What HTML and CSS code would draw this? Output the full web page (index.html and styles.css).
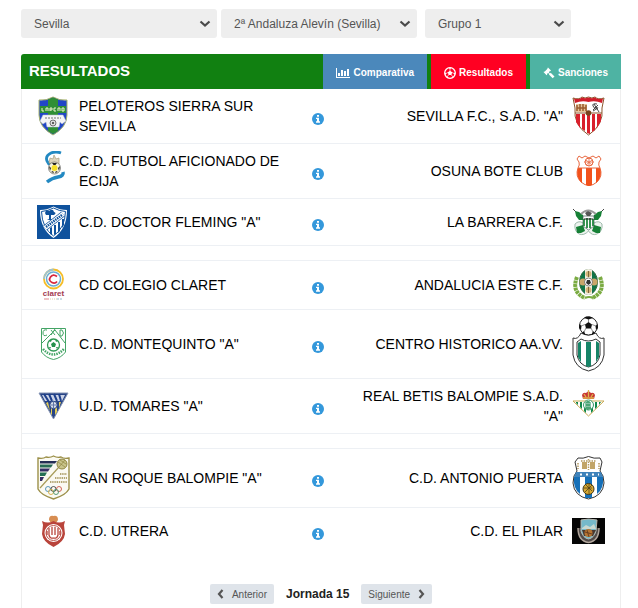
FILE: index.html
```html
<!DOCTYPE html>
<html lang="es">
<head>
    <meta charset="UTF-8">
    <meta name="viewport" content="width=device-width, initial-scale=1.0">
    <title>Resultados</title>
    <link rel="stylesheet" href="styles.css">
</head>
<body>
    <!-- shared icons -->
    <svg class="sprite" aria-hidden="true">
        <symbol id="chevron" viewBox="0 0 12 8">
            <path d="M1.500 1.500 6 5.500 10.500 1.500" fill="none" stroke="#4a4a4a" stroke-width="2.200"/>
        </symbol>
        <symbol id="info" viewBox="0 0 12 12">
            <circle cx="6" cy="6" r="6" fill="#3498db"/>
            <path d="M5 2h2v1.700H5zM4 4.700h3v3.600h1V9.700H4V8.300h1V6H4z" fill="#fff"/>
        </symbol>
    </svg>

    <div class="page">
        <form class="filters">
            <div class="filter">
                <select aria-label="Provincia">
                    <option>Sevilla</option>
                </select>
                <svg class="arrow"><use href="#chevron"/></svg>
            </div>
            <div class="filter">
                <select aria-label="Competición">
                    <option>2ª Andaluza Alevín (Sevilla)</option>
                </select>
                <svg class="arrow"><use href="#chevron"/></svg>
            </div>
            <div class="filter group">
                <select aria-label="Grupo">
                    <option>Grupo 1</option>
                </select>
                <svg class="arrow"><use href="#chevron"/></svg>
            </div>
        </form>

        <div class="panel-header">
            <h1>RESULTADOS</h1>
            <nav class="tabs">
                <a class="tab compare" href="#comparativa">
                    <svg width="14" height="12" viewBox="0 0 14 12"><path d="M0 1h1v9h13v1H0zM2 6h2v3H2zM5 3h2v6H5zM8 4h2v5H8zM11 2h2v7h-2z" fill="#fff"/></svg>
                    Comparativa
                </a>
                <a class="tab results" href="#resultados">
                    <svg width="12" height="12" viewBox="0 0 12 12">
                        <circle cx="6" cy="6" r="5.300" fill="none" stroke="#fff" stroke-width="1.300"/>
                        <path d="M6 3.700 8.200 5.300 7.400 7.900H4.600L3.800 5.300zM4 .8 6 2 8 .8zM.6 5.200 2.200 6.500 1.500 8.600zM11.400 5.200 9.800 6.500 10.500 8.600zM3.400 9 4.300 11.500 2.300 10zM8.600 9 7.700 11.500 9.700 10z" fill="#fff"/>
                        <path d="M6 2V4M2 6.500 4 5.500M10 6.500 8 5.500M3.600 9.300 4.700 7.700M8.400 9.300 7.300 7.700" stroke="#fff" stroke-width=".7"/>
                    </svg>
                    Resultados
                </a>
                <a class="tab sanctions" href="#sanciones">
                    <svg width="12" height="12" viewBox="0 0 12 12"><path d="M5 .5 8 3.500 7.300 4.300 7 4 5.800 5.200 7 6.400 7.700 5.700 11.500 9.500 9.700 11.300 5.900 7.500 6.300 7.100 5.100 5.900 3.900 7.100 4.300 7.500 3.600 8.200.5 5.100 1.200 4.400 1.600 4.800 4.700 1.600 4.300 1.200z" fill="#fff"/></svg>
                    Sanciones
                </a>
            </nav>
        </div>

        <div class="panel">
            <table class="matches">
                <colgroup>
                    <col class="col-crest"><col><col class="col-info"><col><col class="col-crest">
                </colgroup>
                <tbody>
                    <tr>
                        <td class="crest">
                            <svg width="33" height="40" viewBox="0 0 33 40">
                                <path d="M2 4Q9 5 16 1 23 5 30 4V19Q30 31 16 39 2 31 2 19z" fill="#2146c7" stroke="#a9b46c"/>
                                <path d="M11 3.500 16 1.500 21 3.500V35L16 38 11 35z" fill="#2f8f35"/>
                                <path d="M3 10H29V17H3z" fill="#2f8f35"/>
                                <path d="M5 12V15H7M9 12V15M9 12H11V15M13 15V12H15V14H13M17 12V15H19M17 12H19M21 15V12H23V15M25 12H27V15H25z" fill="none" stroke="#eef3cf"/>
                                <path d="M6 19H26L29 25 25 28 23 26 22 31H10L9 26 6 28 3 25z" fill="#f4f5f7" stroke="#b9bfd0" stroke-width=".5"/>
                                <path d="M8 22H24" stroke="#777" stroke-dasharray="2 1"/>
                                <circle cx="16" cy="27" r="3" fill="#ddd" stroke="#555" stroke-width=".8"/>
                                <circle cx="16" cy="27" r="1" fill="#333"/>
                            </svg>
                        </td>
                        <td class="team">PELOTEROS SIERRA SUR SEVILLA</td>
                        <td class="more"><a href="#partido1" aria-label="Información"><svg><use href="#info"/></svg></a></td>
                        <td class="team away">SEVILLA F.C., S.A.D. "A"</td>
                        <td class="crest away">
                            <svg width="33" height="40" viewBox="0 0 33 40">
                                <path d="M1 2Q7 4 10 1 13 3 16.500 1 20 3 23 1 26 4 32 2L30 12Q32 29 16.500 39 1 29 3 12z" fill="#fff" stroke="#8b552c"/>
                                <path d="M2 2.500Q7 4 10 1.500 13 3 16.500 1.500 20 3 23 1.500 26 4 31 2.500L30 7Q23 4 16.500 6 10 4 3 7z" fill="#d01e2b"/>
                                <path d="M4 18H8V32L4 26zM10 18H13V35L10 33zM15 18H18V38L15 37zM20 18H23V34L20 36zM25 18H29V25L25 32z" fill="#d9202c"/>
                                <path d="M4 8H15V16H4z" fill="#e5c59b"/>
                                <path d="M5 15V9M8 15V8M11 15V8M14 15V9M5 12H14" stroke="#9a5b2e" stroke-width="1.500"/>
                                <path d="M3 17H30" stroke="#8b552c"/>
                                <path d="M25 8Q20 7 21 10T25 12 21 15M22 8 27 16M26 9 21 14" fill="none" stroke="#333" stroke-width=".9"/>
                                <circle cx="16.500" cy="17" r="2.800" fill="#7a431f"/>
                            </svg>
                        </td>
                    </tr>
                    <tr>
                        <td class="crest">
                            <svg width="33" height="40" viewBox="0 0 33 40">
                                <path d="M24 2Q19 0 14 2 8 5 10 10 11 13 14 14" fill="none" stroke="#2389c2" stroke-width="2.800"/>
                                <path d="M12 12 13 7 16 8 17 4 19 8 22 7 22 13z" fill="#ddd5bd" stroke="#a99f83" stroke-width=".7"/>
                                <circle cx="17.500" cy="17" r="6" fill="#f7f3dc" stroke="#666" stroke-width=".7"/>
                                <circle cx="17.500" cy="17" r="3" fill="#f6df2a"/>
                                <path d="M15 12H20L18.500 14H16.500zM12 15 14 17 13 20zM23 15 21 17 22 20zM14 21 16 20 17 22zM19 20 21 21 18 22z" fill="#222"/>
                                <path d="M26 21Q27 25 21 26T10 31" fill="none" stroke="#2389c2" stroke-width="3.500"/>
                            </svg>
                        </td>
                        <td class="team">C.D. FUTBOL AFICIONADO DE ECIJA</td>
                        <td class="more"><a href="#partido2" aria-label="Información"><svg><use href="#info"/></svg></a></td>
                        <td class="team away">OSUNA BOTE CLUB</td>
                        <td class="crest away">
                            <svg width="33" height="34" viewBox="0 0 33 34">
                                <path d="M7 2 10 4 13 2 17 4 21 2 24 4 27 2 29 5 27 8Q26 11 28 14 31 22 25 28 17 35 9 28 3 22 6 14 8 11 7 8L5 5z" fill="#fff" stroke="#e8673f"/>
                                <path d="M6 14H10V29Q3 23 6 14M14 14H20V31Q17 33 14 31zM24 14H28Q31 23 24 29z" fill="#f2511b"/>
                                <path d="M6 14H28" stroke="#e8673f"/>
                                <circle cx="17" cy="8" r="4" fill="none" stroke="#e8673f"/>
                                <path d="M14 6 20 11M20 6 14 11M17 4V12M12 8H22" stroke="#e8673f" stroke-width=".8"/>
                            </svg>
                        </td>
                    </tr>
                    <tr>
                        <td class="crest">
                            <svg width="33" height="34" viewBox="0 0 33 34">
                                <path d="M0 0H33V34H0z" fill="#0f529d"/>
                                <path d="M3 5Q10 5 16.500 1.500 23 5 30 5 30 24 16.500 33 3 24 3 5z" fill="#fff"/>
                                <path d="M4.500 6.500Q11 6 16.500 3 22 6 28.500 6.500 28 23 16.500 31 5 23 4.500 6.500z" fill="none" stroke="#0f529d"/>
                                <path d="M8 8Q9 4 12 6 16 3 17 7 20 8 17 10H14V14L16 15H10L12 14V10H9z" fill="#0f529d"/>
                                <path d="M13 23 15 22V30L13 29zM17 20H19V29L17 30zM21 17H23V26L21 28zM25 14H27V20L25 23z" fill="#0f529d"/>
                                <path d="M8 23 26 9" stroke="#0f529d" stroke-width="6"/>
                                <path d="M8 23 26 9" stroke="#fff" stroke-width="4.500"/>
                                <path d="M9 22 25 10" stroke="#0f529d" stroke-width="2.500" stroke-dasharray="1.500 .8"/>
                            </svg>
                        </td>
                        <td class="team">C.D. DOCTOR FLEMING "A"</td>
                        <td class="more"><a href="#partido3" aria-label="Información"><svg><use href="#info"/></svg></a></td>
                        <td class="team away">LA BARRERA C.F.</td>
                        <td class="crest away">
                            <svg width="33" height="34" viewBox="0 0 33 34">
                                <path d="M1 4 9 12M32 4 24 12" stroke="#444"/>
                                <path d="M3 6 7 7 11 10 12 15 7 15 4 11zM30 6 26 7 22 10 21 15 26 15 29 11z" fill="#168036"/>
                                <path d="M9 9Q16 2 24 9" fill="none" stroke="#999" stroke-width="2"/>
                                <path d="M3 19Q7 15 11 18H22Q27 15 30 19 31 26 25 29 20 31 16.500 26 12 31 7 29 2 26 3 19z" fill="#eef4ef" stroke="#8a9" stroke-width=".8"/>
                                <path d="M4 22 11 20 13 26 9 28H5zM29 22 22 20 20 26 24 28H28z" fill="#168036"/>
                                <path d="M11 11H22V21L16.500 25 11 21z" fill="#fff" stroke="#455" stroke-width=".7"/>
                                <path d="M12 14V21M15 13V23M18 13V23M21 14V21" stroke="#168036" stroke-width="1.700"/>
                                <path d="M13 8 16 6 20 8 18 11H15z" fill="#555"/>
                                <path d="M12 14H21" stroke="#222"/>
                            </svg>
                        </td>
                    </tr>
                    <tr class="spacer"><td colspan="5"></td></tr>
                    <tr>
                        <td class="crest">
                            <svg width="33" height="36" viewBox="0 0 33 36">
                                <circle cx="16.500" cy="12" r="9.500" fill="none" stroke="#f5bd27" stroke-width="1.800"/>
                                <path d="M16.500 2.500A9.500 9.500 0 0 0 7 12" fill="none" stroke="#9cc3d3" stroke-width="1.800"/>
                                <circle cx="16.500" cy="12" r="7" fill="none" stroke="#69add1" stroke-width="1.500"/>
                                <path d="M20 9.500Q16 6.500 13.500 10T15 15.500Q18 17 20 14.500" fill="none" stroke="#d8283c" stroke-width="1.800"/>
                                <text x="16.500" y="29" class="claret">claret</text>
                                <path d="M7 32H12" stroke="#d88"/><path d="M13 32H20" stroke="#dca" stroke-dasharray="1 1"/><path d="M20 32H26" stroke="#9bc" stroke-dasharray="2 1"/>
                            </svg>
                        </td>
                        <td class="team">CD COLEGIO CLARET</td>
                        <td class="more"><a href="#partido4" aria-label="Información"><svg><use href="#info"/></svg></a></td>
                        <td class="team away">ANDALUCIA ESTE C.F.</td>
                        <td class="crest away">
                            <svg width="33" height="36" viewBox="0 0 33 36">
                                <path d="M5 10Q-1 25 13 31M28 10Q34 25 20 31" fill="none" stroke="#7bab42" stroke-width="4" stroke-dasharray="3 .6"/>
                                <path d="M13 31Q17 29 21 31" fill="none" stroke="#7bab42" stroke-width="2"/>
                                <ellipse cx="16.500" cy="15" rx="9" ry="12.500" fill="#0f7448" stroke="#376b43"/>
                                <path d="M13 3Q16.500 1 20 3V27Q16.500 29 13 27z" fill="#f2eee0"/>
                                <circle cx="16.500" cy="7" r="3" fill="#d5b67a"/><circle cx="16.500" cy="23" r="3" fill="#d5b67a"/>
                                <circle cx="11" cy="15" r="3.500" fill="#c9a66a"/><circle cx="22" cy="15" r="3.500" fill="#c9a66a"/>
                                <path d="M16.500 4V10M16.500 20V26" stroke="#7c673f"/>
                                <circle cx="16.500" cy="15" r="4" fill="#fff" stroke="#555" stroke-width=".7"/>
                                <path d="M15 13H18L19 16 16.500 18 14 16z" fill="#333"/>
                            </svg>
                        </td>
                    </tr>
                    <tr>
                        <td class="crest">
                            <svg width="33" height="34" viewBox="0 0 33 34">
                                <path d="M4.500 1.500H28.500V25Q24 31 16.500 32.500 9 31 4.500 25z" fill="#fff" stroke="#43a465"/>
                                <path d="M5 16 15 6 18 3 28 16M10 3Q6 2 6 6T10 8M23 3V9H25Q28 6 25 3zM14 3 18 8M18 2 14 8" fill="none" stroke="#43a465"/>
                                <circle cx="16.500" cy="18" r="6" fill="#fff" stroke="#2f9955" stroke-width="1.300"/>
                                <path d="M16.500 15 19 17 18 20H15L14 17zM12 14 15 12 14 15zM21 14 18 12 19 15zM12 20H14L13 22zM21 20H19L20 22z" fill="#24914c"/>
                                <path d="M6 22Q16 33 27 22" fill="none" stroke="#43a465" stroke-width="2.500" stroke-dasharray="1.500 1"/>
                            </svg>
                        </td>
                        <td class="team">C.D. MONTEQUINTO "A"</td>
                        <td class="more"><a href="#partido5" aria-label="Información"><svg><use href="#info"/></svg></a></td>
                        <td class="team away">CENTRO HISTORICO AA.VV.</td>
                        <td class="crest away">
                            <svg width="33" height="56" viewBox="0 0 33 56">
                                <path d="M9 17Q6 24 1 22V39Q3 52 16.500 55 30 52 32 39V22Q27 24 24 17 16 21 9 17z" fill="#fff" stroke="#333"/>
                                <path d="M9 23 5 26V39Q7 49 16.500 51 26 49 28 39V26L24 23Q16 27 9 23z" fill="#fff" stroke="#333"/>
                                <path d="M6 27 9 25V46L6 41zM14 26H19V50L16 51 14 50zM24 25 27 27V41L24 46z" fill="#168467"/>
                                <circle cx="16.500" cy="10" r="9" fill="#fff" stroke="#222"/>
                                <path d="M16.500 6 20 8.500 19 12.500H14L13 8.500zM12 2 16.500 3.500 21 2 18 .5H14zM7.500 8 9.500 10 9 14 7 12zM25.500 8 23.500 10 24 14 26 12zM12 15 13.500 19 10 17zM21 15 19.500 19 23 17z" fill="#111"/>
                                <path d="M16.500 3V6M9 10 13 8.500M24 10 20 8.500M12 16 14 12M21 16 19 12" stroke="#444" stroke-width=".6"/>
                            </svg>
                        </td>
                    </tr>
                    <tr>
                        <td class="crest">
                            <svg width="33" height="34" viewBox="0 0 33 34">
                                <path d="M2 4H31L16.500 30z" fill="#274486" stroke="#8594b4"/>
                                <path d="M5 6H28L25 12H8z" fill="#cbd3e6"/>
                                <path d="M7 5 12 13M12 5 15 12M17 5 20 12M22 5 24 12" stroke="#1d3f8b" stroke-width="2"/>
                                <path d="M9 14 11 13 13 22zM14 13H15V26L14 25zM18 13H20V23L18 26zM22 13H24L22 19z" fill="#e4ce58"/>
                                <circle cx="16.500" cy="16" r="3.700" fill="#d9dfec" stroke="#274486"/>
                                <path d="M14 16H19M16.500 13V19" stroke="#6177a8"/>
                            </svg>
                        </td>
                        <td class="team">U.D. TOMARES "A"</td>
                        <td class="more"><a href="#partido6" aria-label="Información"><svg><use href="#info"/></svg></a></td>
                        <td class="team away">REAL BETIS BALOMPIE S.A.D. "A"</td>
                        <td class="crest away">
                            <svg width="33" height="36" viewBox="0 0 33 36">
                                <path d="M1 13H32L16.500 28z" fill="#fff" stroke="#c9ab55"/>
                                <path d="M4 14H6V17L4 15zM8 14H10V21L8 19zM12 14H14V25L12 23zM19 14H21V23L19 25zM23 14H25V19L23 21zM27 14H29L27 17z" fill="#12884a"/>
                                <circle cx="16.500" cy="17" r="5" fill="#fff" stroke="#3a9a68"/>
                                <path d="M14 14V21M14 14H18V17H14M18 17V21M14 20H19M16 13V22" fill="none" stroke="#12884a"/>
                                <path d="M11 11 10 7Q11 4 14 5L16.500 3 19 5Q22 4 23 7L22 11z" fill="#c83734"/>
                                <path d="M11 10H22M12 6 14 9M21 6 19 9M16.500 2V9" stroke="#dfb44b" stroke-width="1.300"/>
                            </svg>
                        </td>
                    </tr>
                    <tr class="spacer"><td colspan="5"></td></tr>
                    <tr>
                        <td class="crest">
                            <svg width="33" height="46" viewBox="0 0 33 46">
                                <path d="M1 3Q6 4 9 2 13 3 16.500 1 20 3 24 2 27 4 32 3V34Q29 40 16.500 44 4 40 1 34z" fill="#fbfaf2" stroke="#9c9049" stroke-width="1.400"/>
                                <path d="M3 6H20L18 8.500H3z" fill="#252e55"/><path d="M3 9.500H16L14 12.500H3z" fill="#286b55"/><path d="M3 13.500H13L11 16.500H3z" fill="#352e66"/><path d="M3 17.500H10L8 21H3z" fill="#247055"/><path d="M3 22H7L5 26H3z" fill="#352e66"/>
                                <path d="M3 33 22 12" stroke="#a69b58" stroke-width="1.200"/>
                                <circle cx="25" cy="9" r="5" fill="#c9c48b" stroke="#8f8541"/>
                                <path d="M21 7 28 12M23 5 29 9M22 12 28 5" stroke="#8f8541" stroke-width=".7"/>
                                <path d="M23 19H30M18 23H30M13 27H30" stroke="#b5a774" stroke-width="2.200" stroke-dasharray="1.400 .8"/>
                                <g fill="none" stroke-width=".9"><circle cx="11" cy="34" r="2.500" stroke="#4a8db6"/><circle cx="16.500" cy="34" r="2.500" stroke="#444"/><circle cx="22" cy="34" r="2.500" stroke="#cc5447"/><circle cx="14" cy="37" r="2.500" stroke="#d5ae43"/><circle cx="19" cy="37" r="2.500" stroke="#48936b"/></g>
                            </svg>
                        </td>
                        <td class="team">SAN ROQUE BALOMPIE "A"</td>
                        <td class="more"><a href="#partido7" aria-label="Información"><svg><use href="#info"/></svg></a></td>
                        <td class="team away">C.D. ANTONIO PUERTA</td>
                        <td class="crest away">
                            <svg width="33" height="46" viewBox="0 0 33 46">
                                <path d="M6 3Q11 4 16.500 1.500 22 4 28 3L30 7 28 16Q32 20 32 28 31 41 16.500 44 2 41 1 28 1 20 5 16L3 7z" fill="#fff" stroke="#333"/>
                                <path d="M2 22H8V39Q1 34 2 22M13 22H20V43H13zM25 22H31Q32 34 25 39z" fill="#1670b8"/>
                                <path d="M4 17H29L31 22H2z" fill="#3f83bb"/>
                                <path d="M8 19.500H27" stroke="#fff" stroke-width="2" stroke-dasharray="2 4"/>
                                <path d="M10 14V7H15V14zM18 14V7H23V14z" fill="#c2a568"/>
                                <path d="M9 6H16M17 6H24M6 8V14M27 8V14M16.500 4V15" stroke="#b49b62" stroke-width="1.500" stroke-dasharray="1.500 1"/>
                                <circle cx="16.500" cy="34" r="5.500" fill="#d8a932" stroke="#423719"/>
                                <path d="M12 33H20M13 37 20 30M14 30 20 36M17 29V39" stroke="#514219" stroke-width=".8"/>
                            </svg>
                        </td>
                    </tr>
                    <tr>
                        <td class="crest">
                            <svg width="33" height="34" viewBox="0 0 33 34">
                                <path d="M12 6Q12 1 16.500 2 21 1 21 6L19 9H14z" fill="#d78d52"/>
                                <path d="M5 7Q11 10 16.500 7 22 10 28 7L27 11 28 20Q27 28 16.500 33 6 28 5 20L6 11z" fill="#b9443b"/>
                                <circle cx="16.500" cy="19" r="9" fill="#fff"/>
                                <circle cx="16.500" cy="19" r="7.500" fill="none" stroke="#bd554c"/>
                                <path d="M12 14V21Q13 25 16.500 24 20 25 21 21V14M15 13V21M18 13V21M10 17V21M23 17V21" fill="none" stroke="#b9443b" stroke-width="1.300"/>
                            </svg>
                        </td>
                        <td class="team">C.D. UTRERA</td>
                        <td class="more"><a href="#partido8" aria-label="Información"><svg><use href="#info"/></svg></a></td>
                        <td class="team away">C.D. EL PILAR</td>
                        <td class="crest away">
                            <svg width="33" height="26" viewBox="0 0 33 26">
                                <path d="M0 0H33V26H0z" fill="#050505"/>
                                <path d="M6 10Q6 23 16.500 24.500 27 23 27 10" fill="#514b49" stroke="#b1a59b" stroke-width="1.500"/>
                                <path d="M9 2Q16 0 25 2L24 13Q22 20 16.500 21 11 20 9 13z" fill="#76b9ca" stroke="#b9b7ad"/>
                                <path d="M10 10 14 7 18 9 22 6 24 11H10z" fill="#c8d8d2"/>
                                <path d="M10 12H24L21 18H12z" fill="#49372e"/>
                                <circle cx="16.500" cy="15" r="4" fill="#b57432"/>
                                <path d="M13 14 20 16M15 12 17 19" stroke="#5a351d" stroke-width=".8"/>
                            </svg>
                        </td>
                    </tr>
                </tbody>
            </table>

            <div class="pager">
                <button type="button"><svg width="7" height="10" viewBox="0 0 7 10"><path d="M5.500 1 2 5 5.500 9" fill="none" stroke="#555" stroke-width="2.200"/></svg>Anterior</button>
                <strong>Jornada 15</strong>
                <button type="button">Siguiente<svg width="7" height="10" viewBox="0 0 7 10"><path d="M1.500 1 5 5 1.500 9" fill="none" stroke="#555" stroke-width="2.200"/></svg></button>
            </div>
        </div>
    </div>
</body>
</html>
```
FILE: styles.css
```css
* {
    box-sizing: border-box;
}

body {
    margin: 0;
    background: #fff;
    color: #000;
    font-family: "Liberation Sans", Arial, sans-serif;
    font-size: 14px;
    line-height: 20px;
}

svg {
    display: block;
}

.sprite {
    position: absolute;
    width: 0;
    height: 0;
}

.page {
    padding: 9px 17px 0 21px;
}

/* filters */
.filters {
    display: flex;
    gap: 4px;
    margin-bottom: 16px;
}

.filter {
    position: relative;
    flex: 0 1 196px;
}

.filter.group {
    flex-basis: 146px;
    margin-left: 4px;
}

.filter select {
    appearance: none;
    display: block;
    width: 100%;
    height: 29px;
    padding: 0 24px 0 13px;
    border: none;
    border-radius: 3px;
    background: #eee;
    color: #555;
    font-family: inherit;
    font-size: 12px;
}

.arrow {
    position: absolute;
    top: 11px;
    right: 6px;
    width: 12px;
    height: 8px;
    pointer-events: none;
}

/* header */
.panel-header {
    display: flex;
    justify-content: space-between;
    align-items: stretch;
    height: 35px;
    background: #118011;
    border-radius: 3px 0 0 0;
}

.panel-header h1 {
    margin: 0;
    padding-left: 8px;
    color: #fff;
    font-size: 15px;
    line-height: 34px;
}

.tabs {
    display: flex;
    gap: 4px;
}

.tab {
    display: flex;
    align-items: center;
    gap: 3px;
    padding: 2px 13px 0;
    color: #fff;
    font-size: 10px;
    font-weight: bold;
    text-decoration: none;
}

.compare {
    background: #4b88bb;
}

.results {
    background: #ff0022;
}

.sanctions {
    background: #4eb3a3;
}

/* matches */
.panel {
    border: solid #eee;
    border-width: 0 1px;
}

.matches {
    width: 100%;
    table-layout: fixed;
    border-spacing: 0;
}

.col-crest {
    width: 57px;
}

.col-info {
    width: 56px;
}

.matches td {
    padding: 6px 0;
    border-bottom: 1px solid #edf0f4;
    vertical-align: middle;
}

.matches tr:last-child td {
    border-bottom: none;
}

.matches .team {
    padding: 7px 0;
}

.matches .crest {
    padding-left: 15px;
}

.matches .crest.away {
    padding-left: 9px;
}

.team.away {
    text-align: right;
}

.matches .more {
    padding: 6px 6px 0 0;
}

.more svg {
    width: 12px;
    height: 12px;
    margin: 0 auto;
}

.matches .spacer td {
    height: 15px;
    padding: 0;
}

.claret {
    fill: #a33a50;
    font-size: 8px;
    font-weight: bold;
    text-anchor: middle;
}

/* pager */
.pager {
    display: flex;
    justify-content: center;
    align-items: center;
    gap: 12px;
    padding: 30px 0 4px;
    color: #222;
    font-size: 12px;
}

.pager button {
    display: flex;
    align-items: center;
    gap: 8px;
    height: 20px;
    padding: 0 7px;
    border: none;
    border-radius: 2px;
    background: #dfe4ea;
    color: #555;
    font-family: inherit;
    font-size: 10px;
    cursor: pointer;
}
```
